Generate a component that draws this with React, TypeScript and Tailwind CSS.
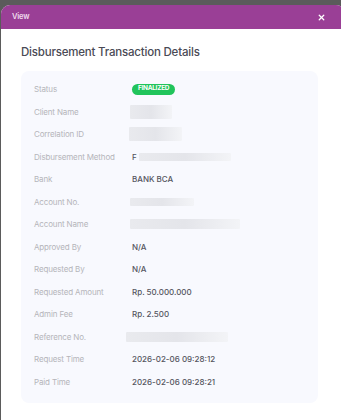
import { X } from 'lucide-react';

type Row = { label: string; value?: string; blur?: string; badge?: boolean };

const rows: Row[] = [
  { label: 'Status', badge: true },
  { label: 'Client Name', blur: 'w-[42px] h-[14px] ml-[-2px]' },
  { label: 'Correlation ID', blur: 'w-[53px] h-[14px] ml-[-3px]' },
  { label: 'Disbursement Method', value: 'F', blur: 'w-[92px] h-[8px] ml-[2px]' },
  { label: 'Bank', value: 'BANK BCA' },
  { label: 'Account No.', blur: 'w-[64px] h-[8px] ml-[-2px]' },
  { label: 'Account Name', blur: 'w-[110px] h-[10px] ml-[-2px]' },
  { label: 'Approved By', value: 'N/A' },
  { label: 'Requested By', value: 'N/A' },
  { label: 'Requested Amount', value: 'Rp. 50.000.000' },
  { label: 'Admin Fee', value: 'Rp. 2.500' },
  { label: 'Reference No.', blur: 'w-[102px] h-[10px] ml-[-6px]' },
  { label: 'Request Time', value: '2026-02-06 09:28:12' },
  { label: 'Paid Time', value: '2026-02-06 09:28:21' },
];

export default function App() {
  return (
    <div className="w-[341px] h-[420px] bg-[#5b5b5b] pl-[1px] pt-[5px] overflow-hidden font-['Inter',sans-serif]">
      <div className="w-[344px] h-[420px] bg-white rounded-t-[9px] overflow-hidden">
        {/* Header */}
        <div className="h-[24px] bg-[#9a3f96] flex items-center justify-between pl-[11px] pr-[19px]">
          <span className="text-[7.5px] font-semibold text-[#f0dcef] tracking-tight">View</span>
          <X size={9} strokeWidth={3.5} className="text-white" />
        </div>

        <div className="pl-[20px] pr-[23px] pt-[15px]">
          <h2 className="text-[11.5px] font-medium text-[#4a4a55] tracking-[-0.2px] leading-[16px]">
            Disbursement Transaction Details
          </h2>

          <div className="mt-[11px] w-[297px] bg-[#f8f9fe] rounded-[8px] pl-[13px] pt-[7px] pb-[10px]">
            {rows.map((r) => (
              <div key={r.label} className="h-[22.5px] flex items-center">
                <span className="w-[98px] text-[8px] text-[#b5b5ba] tracking-[-0.15px]">{r.label}</span>
                <div className="flex items-center">
                  {r.badge && (
                    <span className="h-[11px] px-[6px] rounded-full bg-[#21c45b] text-white text-[6.5px] font-bold flex items-center tracking-[-0.3px]">
                      FINALIZED
                    </span>
                  )}
                  {r.value && (
                    <span className="text-[8px] font-medium text-[#55555e]">{r.value}</span>
                  )}
                  {r.blur && (
                    <span
                      className={`${r.blur} bg-gradient-to-r from-[#e9eaee] via-[#e4e5ea] to-[#f3f4f7] rounded-[1px] blur-[0.6px]`}
                    />
                  )}
                </div>
              </div>
            ))}
          </div>
        </div>
      </div>
    </div>
  );
}
